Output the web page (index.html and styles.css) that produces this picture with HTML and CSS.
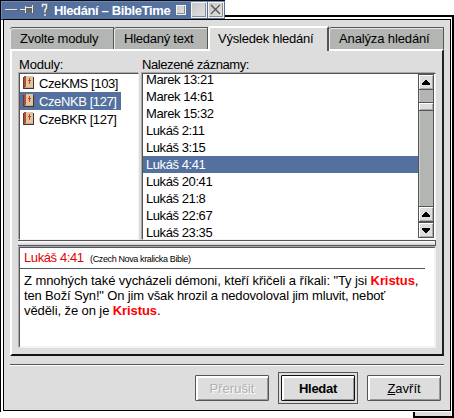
FILE: index.html
```html
<!DOCTYPE html>
<html lang="cs">
<head>
<meta charset="utf-8">
<title>Hledání - BibleTime</title>
<link rel="stylesheet" href="styles.css">
</head>
<body>
<svg class="defs" aria-hidden="true">
  <symbol id="book" viewBox="0 0 12 14">
    <path fill="#7a3428" d="M0 1h2v12H0z"/>
    <path fill="#a5533e" d="M1 0h2v12H1z"/>
    <path fill="#dcc8a0" d="M3 0h7v11H3z"/>
    <path fill="#503028" d="M10 1h1v12h-1zM1 12h10v1H1z"/>
    <path fill="#c4ae8c" d="M2 11h8v1H2z"/>
    <path fill="#e03030" d="M6 2h1v6H6zM5 4h3v1H5z"/>
  </symbol>
  <symbol id="up" viewBox="0 0 8 5"><path d="M3 0h2v1h1v1h1v1h1v2H0V3h1V2h1V1h1z"/></symbol>
  <symbol id="down" viewBox="0 0 8 5"><path d="M3 5h2V4h1V3h1V2h1V0H0v2h1v1h1v1h1z"/></symbol>
</svg>
<div class="back-window"></div>
<div class="window">
  <header class="titlebar">
    <svg class="title-icons" width="51" height="18" viewBox="0 0 51 18">
      <path fill="#e8e8e8" d="M4 8h12v1H4zM19 8h5v1h-5zM24 5h1v7h-1zM25 6h6v1h-6zM31 4h1v8h-1z"/>
      <path fill="#66645f" d="M5 9h12v1H5zM19 9h5v1h-5zM25 7h6v4h-6zM32 5h1v8h-1zM25 11h1v2h-1z"/>
      <path fill="none" stroke="#66645f" stroke-width="2" d="M42 6V4h5v4l-2 2v2M45 13v2"/>
      <path fill="none" stroke="#eee" stroke-width="1.5" d="M41.500 6V3.500h4V7L44 9v2.500M44 13v2"/>
    </svg>
    <span class="title">Hledání – BibleTime</span>
    <span class="tbtn small"></span>
    <span class="tbtn"></span>
    <span class="tbtn"><svg width="14" height="14" viewBox="0 0 14 14"><path d="M2.500 2.500l9 9M11.500 2.500l-9 9" stroke="#fff" stroke-width="1"/><path d="M2 2l9 9M11 2l-9 9" stroke="#555" stroke-width="1.400"/></svg></span>
  </header>
  <main class="body">
    <nav class="tabs">
      <span class="tab t1"><b>Zvolte moduly</b></span>
      <span class="tab t2"><b>Hledaný text</b></span>
      <span class="tab t3 active"><b>Výsledek hledání</b></span>
      <span class="tab t4"><b>Analýza hledání</b></span>
    </nav>
    <section class="panel">
      <div class="lists">
        <div class="col modules">
          <label class="l1">Moduly:</label>
          <div class="box">
            <div class="mod"><svg width="12" height="14"><use href="#book"/></svg><span>CzeKMS [103]</span></div>
            <div class="mod sel"><svg width="12" height="14"><use href="#book"/></svg><span>CzeNKB [127]</span></div>
            <div class="mod"><svg width="12" height="14"><use href="#book"/></svg><span>CzeBKR [127]</span></div>
          </div>
        </div>
        <div class="col results">
          <label class="l2">Nalezené záznamy:</label>
          <div class="box">
            <div class="rows">
              <div class="row first">Marek 13:21</div>
              <div class="row">Marek 14:61</div>
              <div class="row">Marek 15:32</div>
              <div class="row">Lukáš 2:11</div>
              <div class="row">Lukáš 3:15</div>
              <div class="row sel">Lukáš 4:41</div>
              <div class="row">Lukáš 20:41</div>
              <div class="row">Lukáš 21:8</div>
              <div class="row">Lukáš 22:67</div>
              <div class="row">Lukáš 23:35</div>
            </div>
            <div class="scroll">
              <span class="sbtn"><svg width="8" height="5"><use href="#up"/></svg></span>
              <span class="track top"></span>
              <span class="thumb"></span>
              <span class="track"></span>
              <span class="sbtn"><svg width="8" height="5"><use href="#up"/></svg></span>
              <span class="sbtn last"><svg width="8" height="5"><use href="#down"/></svg></span>
            </div>
          </div>
        </div>
      </div>
      <div class="splitter"></div>
      <article class="preview">
        <h1><span class="ref">Lukáš 4:41</span><small>(Czech Nova kralicka Bible)</small></h1>
        <p><span class="p1">Z mnohých také vycházeli démoni, kteří křičeli a říkali: "Ty jsi <strong>Kristus</strong>,</span><br><span class="p2">ten Boží Syn!" On jim však hrozil a nedovoloval jim mluvit, neboť</span><br><span class="p3">věděli, že on je <strong>Kristus</strong>.</span></p>
      </article>
    </section>
    <hr>
    <footer class="buttons">
      <span class="button disabled">Přerušit</span>
      <span class="default"><span class="button">Hledat</span></span>
      <span class="button"><span><u>Z</u>avřít</span></span>
    </footer>
  </main>
</div>
</body>
</html>
```
FILE: styles.css
```css
* { box-sizing: border-box; }
html, body { margin: 0; width: 454px; height: 418px; overflow: hidden; background: #fff; }
body { position: relative; font: 13px/15px "Liberation Sans", sans-serif; color: #000; }
.defs { position: absolute; width: 0; height: 0; }

.back-window {
  position: absolute; left: 413px; top: 15px; width: 41px; height: 403px;
  border: 2px solid #000; background: #ddd; box-shadow: inset -1px 0 #fff;
}
.back-window::before {
  content: ""; position: absolute; right: -2px; top: -2px; width: 229px; height: 4px;
  border-top: 2px solid #000; border-right: 2px solid #000; background: #fff;
}
.window { position: relative; width: 451px; height: 412px; border-left: 1px solid #000; background: linear-gradient(#fff, #fff) bottom / 100% 393px no-repeat; }
.titlebar {
  display: flex; align-items: center; width: 224px; height: 20px;
  border-top: 1px solid #0b0b0b; border-bottom: 1px solid #243d68;
  background: #53709f; box-shadow: inset 1px 1px #6e8ab5; color: #fff;
}
.title-icons { flex: none; display: block; }
.title { width: 121px; margin-left: 2px; white-space: nowrap; font-weight: bold; letter-spacing: -.37px; }
.tbtn { flex: none; width: 16px; height: 16px; margin-left: 1px; border: 1px solid #f4f4f4; background: linear-gradient(135deg, #c6c6c6, #e4e4e4); box-shadow: inset -1px -1px #8c8c8c; }
.tbtn.small { width: 10px; height: 10px; margin: 0 4px 0 1px; }
.tbtn svg { display: block; }

.body {
  display: flex; flex-direction: column; width: 448px; height: 392px; margin: -1px 0 0 2px;
  padding: 6px 6px 0; border: 1px solid #000; background: #ddd;
}
.tabs { display: flex; align-items: flex-end; height: 23px; }
.tab {
  display: flex; align-items: center; height: 22px; padding-left: 10px;
  background: #b2b5b2; border: solid #555; border-width: 1px 1px 0 0;
  box-shadow: inset 1px 1px #e9e9e9; border-top-left-radius: 3px; white-space: nowrap;
}
.tab b { font-weight: normal; }
.t1 { width: 104px; letter-spacing: -.2px; }
.t2 { width: 94px; letter-spacing: -.25px; }
.t3 { letter-spacing: -.22px; }
.t4 { width: 115px; letter-spacing: -.13px; }
.tab.active {
  width: 121px; height: 25px; margin-bottom: -2px; padding: 0 0 3px 8px; background: #ddd; position: relative;
  border-color: #fff #555 #fff #fff; border-width: 2px 2px 0 2px; box-shadow: none;
}
.panel {
  height: 307px; padding: 7px 6px 6px; border: 2px solid; width: 434px;
  border-color: #fff #222 #111 #fff; background: #ddd;
}
.lists { display: flex; gap: 2px; height: 182px; }
.col { display: flex; flex-direction: column; }
.modules { width: 121px; }
.results { width: 295px; }
.col label { height: 14px; line-height: 14px; padding-left: 1px; white-space: nowrap; }
.l1 { letter-spacing: -.2px; }
.l2 { letter-spacing: -.42px; }
.box {
  height: 167px; margin: 1px 0 0 1px; background: #fff; border: 1px solid; overflow: hidden;
  border-color: #555 #f5f2f2 #f5f2f2 #555; box-shadow: -1px -1px #aaa;
}
.mod { display: flex; align-items: center; width: 101px; height: 18px; padding-left: 3px; white-space: nowrap; letter-spacing: -.4px; }
.mod span { margin-left: 4px; }
.sel { background: #53709f; color: #fff; }
.results .box { display: flex; }
.rows { width: 275px; }
.row { height: 17px; line-height: 17px; padding-left: 3px; white-space: nowrap; letter-spacing: -.42px; }
.row.first { margin-top: -3px; }
.scroll { display: flex; flex-direction: column; width: 16px; height: 164px; border: solid #555; border-width: 1px 1px 0; }
.sbtn {
  flex: none; display: flex; align-items: center; justify-content: center; height: 15px; background: #ddd;
  border-bottom: 1px solid #555; box-shadow: inset 1px 1px #fff, inset -1px -1px #aaa;
}
.track { flex: 1; background: #b2b5b2; border-bottom: 1px solid #555; box-shadow: inset 1px 0 #ccc; }
.track.top { flex: none; height: 13px; }
.thumb { flex: none; height: 8px; background: #ddd; border-bottom: 1px solid #555; box-shadow: inset 1px 1px #fff, inset -1px -1px #aaa; }
.sbtn.last { height: 16px; border-top: 1px solid #555; }
.splitter { width: 418px; height: 6px; border: solid #555; border-width: 1px 1px 1px 0; background: linear-gradient(#fff, #d5d0d5); }
.preview {
  width: 417px; height: 101px; margin: 1px 0 0 1px; background: #fff; border: solid; border-color: #555 #f5f2f2 #f5f2f2 #555;
  border-width: 1px 2px 2px 1px; box-shadow: -1px -1px #aaa;
}
h1 { display: flex; align-items: baseline; width: 405px; height: 21px; margin: 0; padding: 2px 0 0 4px; border-bottom: 1px solid #555; font: inherit; line-height: 16px; white-space: nowrap; }
.ref { color: #e00000; width: 66px; letter-spacing: -.4px; }
h1 small { font-size: 9px; letter-spacing: -.37px; }
p { margin: 0; padding: 4px 0 0 4px; white-space: nowrap; }
.p1 { letter-spacing: -.085px; }
.p2 { letter-spacing: -.15px; }
.p3 { letter-spacing: -.09px; }
strong { color: #f00; }
hr { width: 434px; height: 2px; margin: 8px 0 0; border: 0; background: linear-gradient(#555 50%, #fff 50%); }
.buttons { display: flex; align-items: center; justify-content: flex-end; height: 32px; margin: 6px 3px 0 0; }
.button {
  display: flex; align-items: center; justify-content: center; width: 74px; height: 26px; background: #ddd;
  border: 1px solid #555; border-radius: 1px; box-shadow: inset 2px 2px #fff, inset -1px -1px #999;
}
.disabled { color: #b0b0b0; text-shadow: 1px 1px #fff; }
.default { margin: 0 9px; padding: 2px; border: 1px solid #555; font-weight: bold; letter-spacing: -.3px; }
.default .button { border-color: #111; }
```
